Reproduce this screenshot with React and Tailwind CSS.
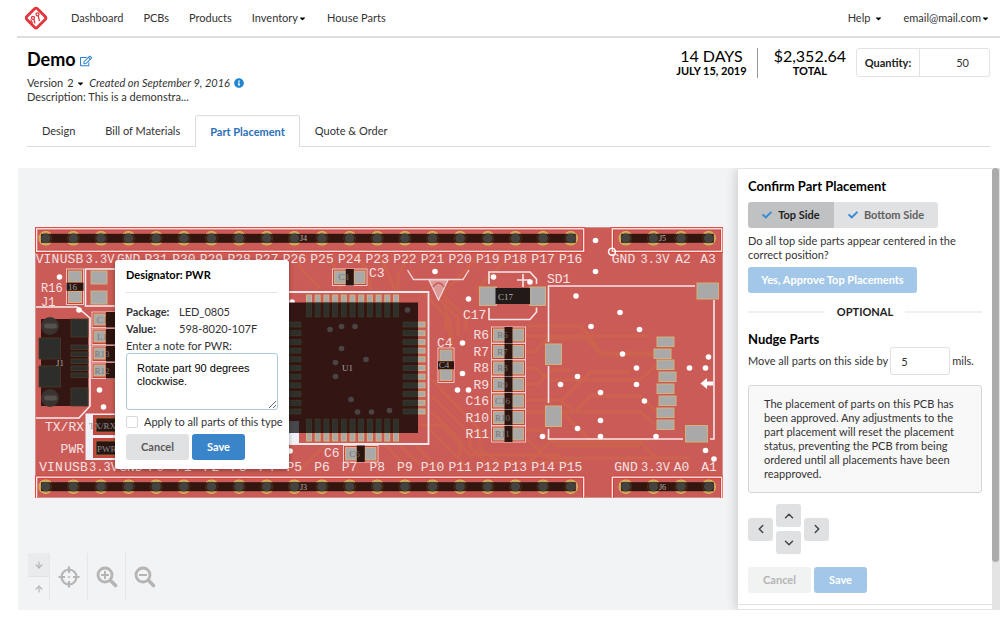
import React, { useState } from 'react';
import { FaCaretDown, FaInfoCircle, FaRegEdit, FaCheck } from 'react-icons/fa';
import { ArrowDown, ArrowUp, ChevronLeft, ChevronRight, ChevronUp, ChevronDown } from 'lucide-react';

const PITCH = 27.63;
const TOP_PINS = ['VIN', 'USB', '3.3V', 'GND', ...Array.from({ length: 16 }, (_, i) => `P${31 - i}`)];
const BOTTOM_PINS = ['VIN', 'USB', '3.3V', 'GND', ...Array.from({ length: 16 }, (_, i) => `P${i}`)];
const RESISTORS = ['R6', 'R7', 'R8', 'R9', 'C16', 'R10', 'R11'];

const VIAS = [
  [59.5, 277], [79, 310], [99.5, 390], [103.5, 407], [290, 451], [435, 271.5], [468.5, 299],
  [462.5, 343], [462.5, 373.5], [457.5, 390], [468.5, 390], [493.5, 277], [530, 282], [595.5, 240.5],
  [595.5, 271.5], [576, 296], [620, 312.5], [591, 326.5], [639.5, 329.5], [622.5, 354], [708.5, 357],
  [636.5, 368], [689.5, 368], [705.5, 368], [577.5, 376.5], [560.5, 384.5], [636.5, 384.5], [600.5, 392.5],
  [644.5, 401], [600.5, 420.5], [577.5, 428.5], [542.5, 436.5], [600.5, 436.5], [656, 436.5], [705.5, 450.5], [714, 459],
];

const CHIP_VIAS = [
  [407.5, 310], [341.5, 326.5], [355, 326.5], [330, 329.5], [341.5, 348.5], [366, 359.5], [335.5, 362.5],
  [335.5, 376.5], [351, 399.5], [357.5, 412], [371.5, 412], [389.5, 410.5],
];

const SD_PADS = [[657, 337], [654, 349], [657, 360], [659, 372], [657, 384], [659, 396], [657, 408], [657, 420]];

const TRACES = [
  'M300 470L345 425H440L470 455H560',
  'M430 300L450 320V345M436 296L458 318V336M444 296L466 318V330',
  'M432 380L480 430V450L500 462H580M432 396L470 434V446L492 468M432 412L460 440V456',
  'M526 326H580L590 336H650M526 336H590L600 353H655M526 352H535L548 338H585L602 355H655',
  'M526 368H535L550 380H640L655 366M526 384H538L552 370H570M526 400H560L575 412H640L655 424',
  'M526 412H575L590 396H640L657 412M526 430H540L556 446H640M526 438L548 458H690',
  'M380 255L395 290M410 255L398 275V290M440 310L420 290M480 256L440 296M510 256L476 290',
  'M300 256V268L320 288M325 256L340 272V290M355 256L370 272V290M452 330V345M446 330V300',
  'M385 445L400 460V470M400 445L420 465M415 445L438 468M430 430L470 470',
  'M530 462L550 442H640L655 456M560 410L590 440H650M562 400L590 372H630',
];

function Logo() {
  return (
    <svg width="24" height="24" viewBox="0 0 24 24" fill="none" stroke="#e0363c" aria-hidden="true">
      <rect x="4.500" y="4.500" width="15" height="15" rx="2" strokeWidth="2.800" transform="rotate(45 12 12)" />
      <g strokeWidth="1.300">
        <circle cx="9" cy="11.800" r="1.500" />
        <circle cx="13.500" cy="8.300" r="1.500" />
        <path d="M9.800 13.300L11 17.500M14.200 9.800L15.500 15M6.500 13.500L8.500 17" />
      </g>
    </svg>
  );
}

function PinRow({ y, x, count, name, nameX, padLeft }) {
  const end = x + (count - 1) * PITCH;
  const pads = Array.from({ length: count }, (_, i) => x + i * PITCH);
  const frame = { x: x - padLeft, y: y - 9.5, width: end - x + padLeft + 13, height: 22.5, fill: 'none' };
  return (
    <g>
      <rect {...frame} stroke="#dc3a2c" strokeWidth="3" />
      <rect {...frame} stroke="#f7e6ea" strokeWidth="1.400" />
      {pads.map(cx => <circle key={cx} cx={cx} cy={y} r="6.200" fill="#b9844c" stroke="#dfbd63" strokeWidth="2" />)}
      <rect x={x - 4.7} y={y - 4.5} width={end - x + 9.8} height="9" fill="#33150f" />
      {pads.map(cx => (
        <g key={cx}>
          <circle cx={cx} cy={y} r="6" fill="none" stroke="#7b6a2a" strokeWidth="1" opacity=".3" />
          <circle cx={cx} cy={y} r="4.800" fill="#444340" />
        </g>
      ))}
      <text x={nameX} y={y + 3} className="font-['Liberation_Serif',serif] text-[8px]" fill="#b9b5b3">{name}</text>
    </g>
  );
}

function Pad({ x, y, w, h }) {
  return <rect x={x} y={y} width={w} height={h} fill="#a9a9a9" stroke="#d2b27a" strokeWidth="1" />;
}

// two-pad part with a dark body in the middle
function Chip({ x, y, w, h, label, vertical }) {
  return (
    <g>
      <rect x={x} y={y} width={w} height={h} fill="#c9443c" stroke="#efc9ca" strokeWidth="1" />
      {vertical ? (
        <>
          <Pad x={x + 2} y={y + 2} w={w - 4} h={11} />
          <Pad x={x + 2} y={y + h - 13} w={w - 4} h={11} />
          <rect x={x} y={y + h / 2 - 4} width={w} height="8" fill="#2c1411" />
        </>
      ) : (
        <>
          <Pad x={x + 2} y={y + 2} w={11} h={h - 4} />
          <Pad x={x + w - 13} y={y + 2} w={11} h={h - 4} />
          <rect x={x + w / 2 - 4} y={y} width="8" height={h} fill="#2c1411" />
        </>
      )}
      <text x={vertical ? x + 6 : x + 11} y={y + h / 2 + 3} textAnchor="middle" className="font-['Liberation_Serif',serif] text-[9px]" fill={vertical ? '#a0a0a0' : '#747474'}>{label}</text>
    </g>
  );
}

function Silk({ x, y, anchor = 'start', small, children }) {
  return (
    <text
      x={x}
      y={y}
      textAnchor={anchor}
      className={small ? "font-['Liberation_Mono',monospace] text-[12px]" : "font-['Liberation_Mono',monospace] text-[13px]"}
      fill="#f6e1e3"
    >
      {children}
    </text>
  );
}

function PinLabels({ pins, y, centers }) {
  return pins.map((p, i) => (
    <Silk key={p} x={centers[i]} y={y} anchor="middle" small={p.length > 3}>{p}</Silk>
  ));
}

function Board() {
  const eleven = Array.from({ length: 11 }, (_, i) => i);
  const padCenters = TOP_PINS.map((_, i) => 45.7 + i * PITCH);
  return (
    <svg width="688" height="271" viewBox="35 227 688 271" className="block" role="img" aria-label="Top side of the board">
      <rect x="35" y="227" width="688" height="271" fill="#cb5b56" />
      <rect x="35.500" y="227.500" width="687" height="270" fill="none" stroke="#d9908b" />
      <g fill="none" stroke="#cf6a48" strokeWidth="3" opacity=".5">
        {TRACES.map(d => <path key={d} d={d} />)}
      </g>

      <PinRow x={45.7} y={238.3} count={20} name="J4" nameX={300} padLeft={9} />
      <PinRow x={625.8} y={238.3} count={4} name="J5" nameX={659} padLeft={13.5} />
      <PinRow x={45.7} y={486.7} count={20} name="J3" nameX={300} padLeft={9} />
      <PinRow x={625.8} y={486.7} count={4} name="J6" nameX={659} padLeft={13.5} />

      <PinLabels pins={TOP_PINS} y={263} centers={[47.5, 71.5, 100, ...padCenters.slice(3)]} />
      <PinLabels pins={BOTTOM_PINS} y={471} centers={[51, 76, 103.5, 131, ...padCenters.slice(4)]} />
      <PinLabels pins={['GND', '3.3V', 'A2', 'A3']} y={263} centers={[623.5, 655, 683, 708]} />
      <PinLabels pins={['GND', '3.3V', 'A0', 'A1']} y={471} centers={[626, 655.5, 681.5, 709]} />

      {/* left edge */}
      <Silk x={41} y={292} small>R16</Silk>
      <Silk x={41} y={306} small>J1</Silk>
      <Chip x={66.5} y={269} w={17} h={35.5} label="16" vertical />
      <path d="M116 269H85.500V306H116" fill="none" stroke="#f7eef0" strokeWidth="1.600" />
      <Pad x={91} y={271} w={16} h={13} />
      <Pad x={91} y={291} w={16} h={13} />
      <path d="M36 307H77L90 318V406L79 418H36" fill="none" stroke="#f7eef0" strokeWidth="1.600" />
      <rect x="41" y="319" width="47" height="87" fill="#331614" />
      <g fill="#2d2d2c" stroke="#4a3d22" strokeWidth=".8">
        <rect x="39" y="338" width="21.500" height="21" />
        <rect x="39" y="366" width="21.500" height="21" />
        <rect x="71" y="319" width="17" height="18" />
        <rect x="71" y="388" width="17" height="18" />
        {[345, 352, 359, 366, 373].map(y => <rect key={y} x="71" y={y} width="17" height="4.500" />)}
      </g>
      {[326, 398].map(y => (
        <g key={y}>
          <circle cx="50" cy={y} r="9" fill="#3a3431" />
          <rect x="44" y={y - 2.5} width="13" height="5" rx="2.500" fill="#58504d" />
        </g>
      ))}
      <text x="56" y="366" className="font-['Liberation_Serif',serif] text-[9px]" fill="#a8a4a2">J1</text>
      {['C1', 'L1', 'R13', 'R12'].map((p, i) => (
        <g key={p}>
          <rect x="92" y={312 + i * 17} width="30" height="15.500" fill="#c9443c" stroke="#efc9ca" />
          <Pad x={94} y={314 + i * 17} w={11} h={11} />
          <rect x="106" y={312 + i * 17} width="14" height="15.500" fill="#2c1411" />
          <text x="102" y={323 + i * 17} textAnchor="middle" className="font-['Liberation_Serif',serif] text-[9px]" fill="#787878">{p}</text>
        </g>
      ))}
      <Silk x={84} y={431} anchor="end">TX/RX</Silk>
      <Silk x={84} y={453} anchor="end">PWR</Silk>
      <rect x="85.500" y="413.500" width="32" height="46.500" fill="#eef2f8" />
      {['TX/RX', 'PWR'].map((p, i) => (
        <g key={p}>
          <rect x="93" y={415 + i * 23} width="26" height="20" fill="#c9443c" />
          <rect x="96" y={418 + i * 23} width="24" height="14" fill="#2a1513" stroke="#8f7b3c" strokeWidth=".8" />
          <text x={i ? 97 : 89} y={429 + i * 23} className="font-['Liberation_Serif',serif] text-[9px]" fill="#8d8d8d">{p}</text>
        </g>
      ))}

      {/* U1 */}
      <path d="M280 292H428.500V444H280" fill="none" stroke="#f7e6ea" strokeWidth="1.800" />
      {eleven.map(i => (
        <g key={i}>
          <Pad x={306.5 + i * 8.7} y={295} w={5} h={22} />
          <Pad x={306.5 + i * 8.7} y={419} w={5} h={22} />
          <Pad x={403} y={322 + i * 8.7} w={22} h={5} />
        </g>
      ))}
      <rect x="280" y="421" width="19" height="22.500" fill="#eef2f8" />
      <circle cx="292" cy="302" r="2.800" fill="#fff" />
      <rect x="280" y="302.500" width="138" height="130.500" fill="#331614" />
      <g fill="#2d302c" stroke="#3f3a22" strokeWidth=".7">
        {eleven.map(i => (
          <g key={i}>
            <rect x={306.5 + i * 8.7} y="303" width="5" height="14" />
            <rect x={306.5 + i * 8.7} y="419" width="5" height="13.500" />
            <rect x="403" y={322 + i * 8.7} width="14.500" height="5" />
            <rect x="286" y={322 + i * 8.7} width="15" height="5" />
          </g>
        ))}
      </g>
      <rect x="280" y="421" width="19" height="12" fill="#48474b" />
      {CHIP_VIAS.map(([x, y]) => <circle key={`${x}-${y}`} cx={x} cy={y} r="2.800" fill="#4a4444" />)}
      <text x="342" y="371" className="font-['Liberation_Serif',serif] text-[9px]" fill="#a8a4a2">U1</text>

      {/* small capacitors */}
      <Chip x={332.5} y={269} w={34.5} h={16.5} label="C3" />
      <Silk x={369} y={277}>C3</Silk>
      <Chip x={343.5} y={445.5} w={34.5} h={16.5} label="C6" />
      <Silk x={324} y={457}>C6</Silk>
      <Chip x={438} y={348} w={16} h={34.5} label="C4" vertical />
      <Silk x={437} y={347}>C4</Silk>

      <path d="M407.500 270L413.500 279.500H463L469 270" fill="none" stroke="#f2d5d7" strokeWidth="1.400" />
      <path d="M429 280H448L438.500 300Z" fill="#dc9a98" stroke="#f2d5d7" strokeWidth="1.200" />
      <path d="M433 287Q438.500 279 444 287" fill="none" stroke="#cb5b56" strokeWidth="1.500" />

      {/* C17 */}
      <path d="M489 284V272H530L536.500 279V284M489 308V319.500H530L536.500 312V307.500M523 274V287M517 280H530" fill="none" stroke="#f7e6ea" strokeWidth="1.600" />
      <Pad x={479.5} y={287} w={17} h={18.5} />
      <Pad x={530} y={287} w={15.5} h={18.5} />
      <rect x="495.500" y="288" width="34.500" height="16" fill="#211a19" />
      <text x="498" y="299.500" className="font-['Liberation_Serif',serif] text-[9px]" fill="#b5b1b0">C17</text>
      <Silk x={463} y={319}>C17</Silk>

      {RESISTORS.map((p, i) => (
        <g key={p}>
          <Chip x={491.5} y={327 + i * 16.5} w={34} h={16} label={p} />
          <Silk x={489} y={339 + i * 16.5} anchor="end">{p}</Silk>
        </g>
      ))}

      {/* SD1 */}
      <Silk x={547} y={283}>SD1</Silk>
      <path d="M548.500 342V286H695M548.500 366V403M548.500 429V439H683M714 300V439H710" fill="none" stroke="#f7e6ea" strokeWidth="1.600" />
      <Pad x={697} y={283} w={21.5} h={16} />
      <Pad x={545.5} y={344} w={16} h={20.5} />
      <Pad x={545.5} y={406} w={16} h={20.5} />
      <Pad x={685.5} y={425.5} w={22} h={16.5} />
      {SD_PADS.map(([x, y]) => <Pad key={y} x={x} y={y} w={17} h={9.5} />)}
      <path d="M700.500 383.500L707 378V381.500H713V385.500H707V389Z" fill="#fff" />

      {VIAS.map(([x, y]) => <circle key={`${x}-${y}`} cx={x} cy={y} r="2.800" fill="#fff" />)}
      <circle cx="612" cy="251.700" r="3.400" fill="none" stroke="#fff" strokeWidth="1.600" />
    </svg>
  );
}

function Button({ className, children, ...rest }) {
  return (
    <button type="button" className={`h-[26px] rounded-[3px] font-bold ${className}`} {...rest}>{children}</button>
  );
}

function NotePopup() {
  const [note, setNote] = useState('Rotate part 90 degrees\nclockwise.');
  return (
    <div className="absolute left-[97px] top-[92px] w-[174px] rounded-[3px] bg-white px-[11px] pt-2 pb-[9px] shadow-[0_1px_4px_rgba(0,0,0,0.35)]">
      <h3 className="font-bold text-black">Designator: PWR</h3>
      <hr className="mt-2.5 mb-3 border-[#e4e4e4]" />
      <dl className="grid grid-cols-[53px_1fr] gap-y-[3px]">
        <dt className="font-bold">Package:</dt>
        <dd>LED_0805</dd>
        <dt className="font-bold">Value:</dt>
        <dd>598-8020-107F</dd>
      </dl>
      <label htmlFor="note" className="mt-[3px] block">Enter a note for PWR:</label>
      <textarea
        id="note"
        value={note}
        onChange={e => setNote(e.target.value)}
        className="block h-[57px] w-full resize rounded-[3px] border border-[#a9c8e2] px-2.5 py-2 font-['Liberation_Sans',sans-serif] leading-[13px] text-black outline-none"
      />
      <label className="mt-[5px] flex items-center gap-1.5 whitespace-nowrap">
        <input type="checkbox" className="size-3 shrink-0 appearance-none rounded-[2px] border border-[#d8d8d8] bg-white" />
        Apply to all parts of this type
      </label>
      <div className="mt-[5px] flex gap-[3px]">
        <Button className="w-[63px] bg-[#e0e1e2] text-[#5a5a5a]">Cancel</Button>
        <Button className="w-[53px] bg-[#3a84c9] text-white">Save</Button>
      </div>
    </div>
  );
}

function ViewTools() {
  return (
    <div className="mt-[55px] ml-2.5 flex h-[47px] text-[#b5b5b5]">
      <div className="flex w-[22px] flex-col border-r border-[#e5e6e8]">
        <button type="button" aria-label="Bring down" className="flex h-6 items-center justify-center rounded-tl-[2px] border-b border-[#e2e3e5] bg-[#eaebed]">
          <ArrowDown size={10} strokeWidth={3} />
        </button>
        <button type="button" aria-label="Bring up" className="flex flex-1 items-center justify-center">
          <ArrowUp size={10} strokeWidth={3} />
        </button>
      </div>
      <button type="button" aria-label="Center" className="flex w-[38px] items-center justify-center border-r border-[#e5e6e8]">
        <svg width="22" height="22" viewBox="0 0 22 22" fill="none" stroke="currentColor" strokeWidth="2.200">
          <circle cx="11" cy="11" r="7.500" />
          <path d="M11 .5V7M11 15V21.500M.5 11H7M15 11H21.500" />
          <circle cx="11" cy="11" r="1" fill="currentColor" stroke="none" />
        </svg>
      </button>
      <button type="button" aria-label="Zoom in" className="flex w-[38px] items-center justify-center border-r border-[#e5e6e8]">
        <svg width="22" height="22" viewBox="0 0 22 22" fill="none" stroke="currentColor" strokeWidth="2.800">
          <circle cx="9" cy="9" r="7" />
          <path d="M14.500 14.500L19.500 19.500" strokeWidth="3.600" strokeLinecap="round" />
          <path d="M9 5V13M5 9H13" strokeWidth="2" />
        </svg>
      </button>
      <button type="button" aria-label="Zoom out" className="flex w-[38px] items-center justify-center">
        <svg width="22" height="22" viewBox="0 0 22 22" fill="none" stroke="currentColor" strokeWidth="2.800">
          <circle cx="9" cy="9" r="7" />
          <path d="M14.500 14.500L19.500 19.500" strokeWidth="3.600" strokeLinecap="round" />
          <path d="M5 9H13" strokeWidth="2" />
        </svg>
      </button>
    </div>
  );
}

function NudgeButton({ icon: Icon, label }) {
  return (
    <button type="button" aria-label={label} className="flex h-[23px] w-[25px] items-center justify-center rounded-[3px] bg-[#e0e1e2] text-[#444]">
      <Icon size={14} strokeWidth={2.5} />
    </button>
  );
}

function Sidebar() {
  return (
    <aside className="z-10 flex w-[262px] shrink-0 bg-white shadow-[-2px_0_10px_rgba(0,0,0,0.16)]">
      <div className="flex-1 border-y border-[#e3e3e3]">
        <div className="border-b border-[#e3e3e3] px-2.5 pt-[9px] pb-[11px]">
          <h2 className="text-[13px] leading-4 font-bold text-black">Confirm Part Placement</h2>
          <div className="mt-2 flex">
            <button type="button" className="flex h-[26px] w-[86px] items-center justify-center gap-1.5 rounded-l-[3px] bg-[#c0c1c2] font-bold text-[#222]">
              <FaCheck size={10} className="text-[#3a8ad6]" /> Top Side
            </button>
            <button type="button" className="flex h-[26px] w-[104px] items-center justify-center gap-1.5 rounded-r-[3px] bg-[#e0e1e2] font-bold text-[#606060]">
              <FaCheck size={10} className="text-[#3a8ad6]" /> Bottom Side
            </button>
          </div>
          <p className="mt-1.5 w-[210px]">Do all top side parts appear centered in the correct position?</p>
          <Button className="mt-[5px] w-[169px] bg-[#a3c7e8] text-white">Yes, Approve Top Placements</Button>
          <div className="mt-3 flex items-center gap-3 font-bold text-[#222]">
            <span className="h-0.5 flex-1 bg-[#f0f0f0]" />
            OPTIONAL
            <span className="h-0.5 flex-1 bg-[#f0f0f0]" />
          </div>
          <h2 className="mt-3 text-[13px] leading-4 font-bold text-black">Nudge Parts</h2>
          <label className="flex items-center gap-0.5">
            Move all parts on this side by
            <input type="text" defaultValue="5" className="h-7 w-[60px] rounded-[3px] border border-[#e0e0e0] px-2.5 outline-none" />
            mils.
          </label>
          <p className="mt-2.5 rounded-[3px] border border-[#d6d6d6] bg-[#f8f8f8] px-[15px] py-[11px]">
            The placement of parts on this PCB has been approved. Any adjustments to the part placement will reset the placement status, preventing the PCB from being ordered until all placements have been reapproved.
          </p>
          <div className="mt-[11px] flex items-center gap-[3px]">
            <NudgeButton icon={ChevronLeft} label="Nudge left" />
            <div className="flex flex-col gap-1">
              <NudgeButton icon={ChevronUp} label="Nudge up" />
              <NudgeButton icon={ChevronDown} label="Nudge down" />
            </div>
            <NudgeButton icon={ChevronRight} label="Nudge right" />
          </div>
          <div className="mt-[13px] flex gap-[3px]">
            <Button className="w-[63px] bg-[#f1f2f2] text-[#b4b4b4]">Cancel</Button>
            <Button className="w-[53px] bg-[#a3c7e8] text-white">Save</Button>
          </div>
        </div>
      </div>
      <div className="w-2 bg-[#e4e4e4]">
        <div className="h-[394px] w-[7px] rounded-full bg-[#ababab]" />
      </div>
    </aside>
  );
}

const TABS = ['Design', 'Bill of Materials', 'Part Placement', 'Quote & Order'];

export default function App() {
  const [tab, setTab] = useState('Part Placement');

  return (
    <div className="bg-white pb-6 font-['Lato',sans-serif] text-[11px] leading-[14px] text-[#333]">
      <header className="ml-[17px] flex h-[38px] items-center border-b-2 border-[#dedede] pr-2.5 pl-[7px]">
        <Logo />
        <nav className="ml-[23px] flex flex-1 items-center gap-5">
          <a href="#dashboard">Dashboard</a>
          <a href="#pcbs">PCBs</a>
          <a href="#products">Products</a>
          <button type="button" className="flex items-center">Inventory<FaCaretDown size={9} className="text-black" /></button>
          <a href="#house-parts">House Parts</a>
        </nav>
        <div className="flex items-center gap-5">
          <button type="button" className="flex items-center gap-1">Help <FaCaretDown size={9} className="text-black" /></button>
          <button type="button" className="flex items-center">email@mail.com<FaCaretDown size={9} className="text-black" /></button>
        </div>
      </header>

      {/* Project summary */}
      <section className="mr-2.5 ml-[27px] flex items-start justify-between pt-2.5">
        <div>
          <div className="flex items-center gap-1">
            <h1 className="text-[18px] leading-[22px] font-bold text-black">Demo</h1>
            <FaRegEdit size={12} className="mt-1 text-[#2c7fc9]" />
          </div>
          <div className="mt-1.5 flex items-center">
            <label htmlFor="version">Version</label>
            <span className="relative ml-1 flex items-center">
              <select id="version" defaultValue="2" className="w-[18px] appearance-none outline-none">
                <option>2</option>
              </select>
              <FaCaretDown size={9} className="pointer-events-none absolute right-0 text-black" />
            </span>
            <em className="ml-1">Created on September 9, 2016</em>
            <FaInfoCircle size={10} className="ml-1 text-[#2185d0]" />
          </div>
          <p>Description: This is a demonstra...</p>
        </div>
        <div className="flex items-start text-center text-black">
          <div className="pr-2.5">
            <div className="text-[16px] leading-4">14 DAYS</div>
            <div className="font-bold">JULY 15, 2019</div>
          </div>
          <div className="h-[30px] border-l border-[#999]" />
          <div className="pr-2.5 pl-4">
            <div className="text-[16px] leading-4">$2,352.64</div>
            <div className="font-bold">TOTAL</div>
          </div>
          <div className="flex h-[29px] w-[134px] rounded-[3px] border border-[#e3e3e3]">
            <label htmlFor="qty" className="flex w-[63px] items-center justify-center border-r border-[#e3e3e3] font-bold text-[#222]">Quantity:</label>
            <input id="qty" type="text" defaultValue="50" className="min-w-0 flex-1 pr-5 text-right text-[#333] outline-none" />
          </div>
        </div>
      </section>

      <div role="tablist" className="mt-[11px] mr-2.5 ml-[27px] flex border-b border-[#dcdcdc]">
        {TABS.map(t => (
          <button
            key={t}
            type="button"
            role="tab"
            aria-selected={t === tab}
            onClick={() => setTab(t)}
            className={t === tab
              ? '-mb-px h-8 rounded-t-[3px] border border-b-0 border-[#dcdcdc] bg-white px-3.5 font-bold text-[#2a6fb8]'
              : '-mb-px h-8 px-[15px]'}
          >
            {t}
          </button>
        ))}
      </div>

      <main className="mt-[21px] ml-[18px] flex overflow-hidden">
        <div className="relative min-w-0 flex-1 bg-[#f2f3f5] pt-[59px] pb-2.5">
          <div className="ml-[17px]">
            <Board />
          </div>
          <NotePopup />
          <ViewTools />
        </div>
        <Sidebar />
      </main>
    </div>
  );
}
